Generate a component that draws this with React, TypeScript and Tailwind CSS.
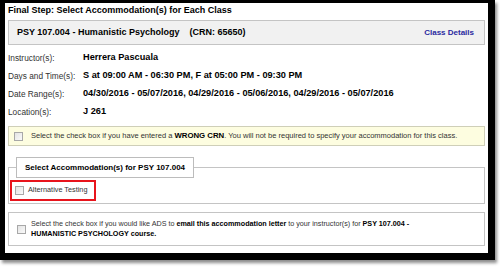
import React from "react";

const Check = () => (
  <span className="inline-block w-[9px] h-[9px] border border-[#a8a8a8] bg-gradient-to-br from-[#e4e4e4] to-[#fafafa] shrink-0" />
);

export default function App() {
  return (
    <div className="w-[500px] h-[268px] bg-white" style={{ fontFamily: '"Liberation Sans", Arial, sans-serif' }}>
      <div className="w-[495px] h-[260px] border-black border-l-[5px] border-t-[3px] border-r-[7px] border-b-[7px] shadow-[2px_3px_3px_rgba(0,0,0,0.45)] bg-white flex flex-col px-[3px] text-[8.3px] text-[#333]">
        <div className="font-bold text-black text-[9px] leading-[13px] pt-[1px] whitespace-nowrap">Final Step: Select Accommodation(s) for Each Class</div>
        <div className="mt-[3px] h-[25px] border border-[#c4c4c4] bg-[#f1f1f1] flex items-center justify-between pl-[8px] pr-[10px] font-bold text-black text-[9px] whitespace-nowrap">
          <span>PSY 107.004 - Humanistic Psychology&nbsp;&nbsp;&nbsp;&nbsp;(CRN: 65650)</span>
          <span className="text-[#2a2aa0] text-[8px]">Class Details</span>
        </div>
        <div className="mt-[4px] grid grid-cols-[75px_1fr] auto-rows-[18px] items-center whitespace-nowrap">
          <span>Instructor(s):</span>
          <span className="font-bold text-black text-[9.2px]">Herrera Pascuala</span>
          <span>Days and Time(s):</span>
          <span className="font-bold text-black text-[9.2px]">S at 09:00 AM - 06:30 PM, F at 05:00 PM - 09:30 PM</span>
          <span>Date Range(s):</span>
          <span className="font-bold text-black text-[9.2px]">04/30/2016 - 05/07/2016, 04/29/2016 - 05/06/2016, 04/29/2016 - 05/07/2016</span>
          <span>Location(s):</span>
          <span className="font-bold text-black text-[9.2px]">J 261</span>
        </div>
        <div className="mt-[5px] h-[20px] border border-[#cfcfb8] bg-[#fdfde0] flex items-center gap-[8px] pl-[5px] text-[7.5px] whitespace-nowrap">
          <Check />
          <span>Select the check box if you have entered a <b className="text-black text-[7.8px]">WRONG CRN</b>. You will not be required to specify your accommodation for this class.</span>
        </div>
        <div className="mt-[21px] h-[37px] border border-[#c4c4c4] relative">
          <div className="absolute left-[7px] top-[-11px] h-[21px] px-[8px] border border-[#bcbcbc] bg-white flex items-center font-bold text-black text-[8px] whitespace-nowrap">
            Select Accommodation(s) for PSY 107.004
          </div>
          <div className="absolute left-[1px] top-[12px] w-[86px] h-[21px] border-[2px] border-[#e8141c] flex items-center gap-[4px] pl-[3px] text-[7.3px] whitespace-nowrap">
            <Check />
            <span>Alternative Testing</span>
          </div>
        </div>
        <div className="mt-[8px] h-[34px] border border-[#c4c4c4] flex items-center gap-[5px] pl-[8px] text-[7.2px]">
          <Check />
          <span className="leading-[10px] whitespace-nowrap">
            Select the check box if you would like ADS to <b className="text-black text-[7.2px]">email this accommodation letter</b> to your instructor(s) for <b className="text-black text-[7.2px]">PSY 107.004 -</b>
            <br />
            <b className="text-black text-[7.2px]">HUMANISTIC PSYCHOLOGY course.</b>
          </span>
        </div>
      </div>
    </div>
  );
}
